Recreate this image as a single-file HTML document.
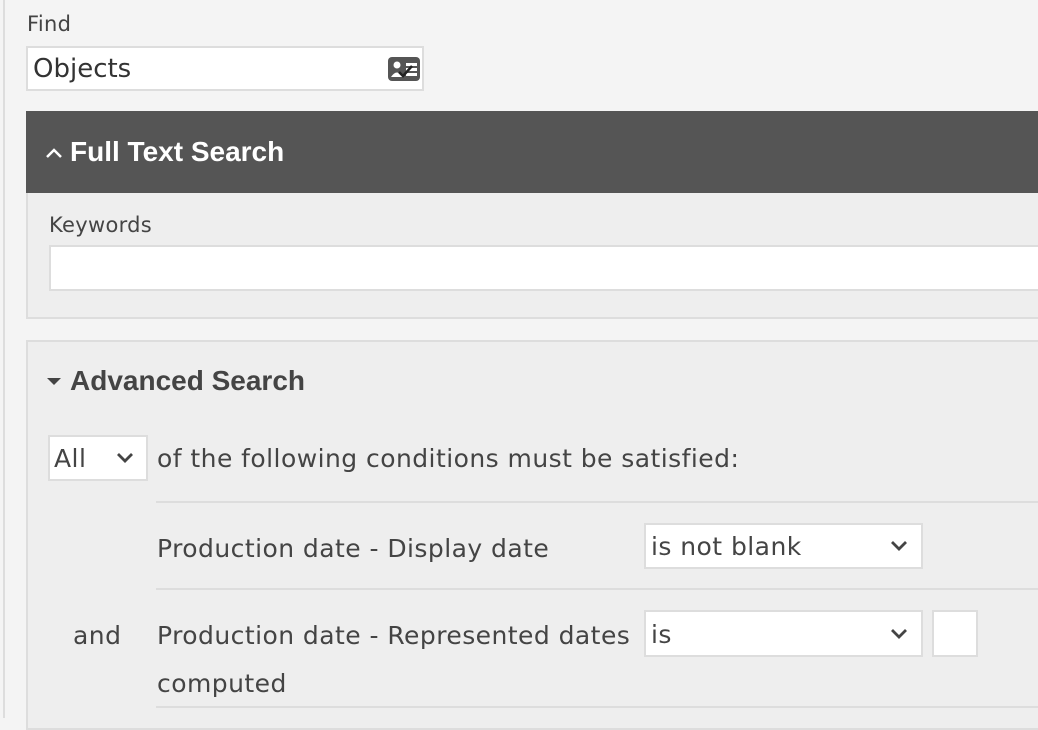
<!DOCTYPE html>
<html><head><style>
body{margin:0;width:1038px;height:718px;background:#f4f4f4;font-family:"DejaVu Sans",sans-serif;color:#444;position:relative;overflow:hidden}
.a{position:absolute}
.box{position:absolute;background:#fff;border:2px solid #ddd;box-sizing:border-box}
.t{position:absolute;white-space:nowrap;font-size:25px;color:#444;letter-spacing:0.45px}
.h{font-family:"Liberation Sans",sans-serif;font-weight:bold;font-size:28px;letter-spacing:0}
.line{position:absolute;height:2px;background:#ddd}
</style></head><body>
<div class="a" style="left:3px;top:0;width:2px;height:718px;background:#ddd"></div>
<div class="t" style="left:27px;top:12px;font-size:21px;letter-spacing:0.3px">Find</div>
<div class="box" style="left:26px;top:46px;width:398px;height:45px"></div>
<div class="t" style="left:33px;top:54px;font-size:26px;color:#333;letter-spacing:0">Objects</div>
<svg class="a" style="left:388px;top:57px" width="32" height="24" viewBox="0 0 32 24"><rect x="0" y="0" width="32" height="24" rx="4" fill="#555"/><circle cx="9" cy="8" r="3.5" fill="#fff"/><path d="M3 20 Q9 11 15 20Z" fill="#fff"/><rect x="18" y="6" width="11" height="3" fill="#fff"/><rect x="18" y="11" width="11" height="3" fill="#fff"/><rect x="18" y="16" width="11" height="3" fill="#fff"/><path d="M11 15 L15 19 L24 9" stroke="#222" stroke-width="2.5" fill="none"/></svg>

<div class="a" style="left:26px;top:111px;width:1012px;height:82px;background:#555"></div>
<svg class="a" style="left:44px;top:146px" width="20" height="14"><path d="M3 11 L10 4 L17 11" stroke="#fff" stroke-width="2.5" fill="none"/></svg>
<div class="t h" style="left:70px;top:136px;color:#fff">Full Text Search</div>
<div class="a" style="left:26px;top:193px;width:1012px;height:126px;background:#eee;border-left:2px solid #ddd;border-bottom:2px solid #ddd;box-sizing:border-box"></div>
<div class="t" style="left:49px;top:213px;font-size:21px;letter-spacing:0.3px">Keywords</div>
<div class="box" style="left:49px;top:245px;width:995px;height:46px"></div>

<div class="a" style="left:26px;top:340px;width:1020px;height:390px;background:#eee;border:2px solid #ddd;box-sizing:border-box"></div>
<svg class="a" style="left:46px;top:376px" width="18" height="12"><path d="M1 2 L15 2 L8 9Z" fill="#444"/></svg>
<div class="t h" style="left:70px;top:365px">Advanced Search</div>
<div class="box" style="left:48px;top:435px;width:100px;height:46px"></div>
<div class="t" style="left:54px;top:444px">All</div>
<svg class="a" style="left:115px;top:451px" width="20" height="14"><path d="M3 3 L10 10 L17 3" stroke="#444" stroke-width="2.8" fill="none"/></svg>
<div class="t" style="left:157px;top:444px">of the following conditions must be satisfied:</div>
<div class="line" style="left:156px;top:501px;width:900px"></div>
<div class="t" style="left:157px;top:534px">Production date - Display date</div>
<div class="box" style="left:644px;top:523px;width:279px;height:46px"></div>
<div class="t" style="left:651px;top:532px">is not blank</div>
<svg class="a" style="left:889px;top:539px" width="20" height="14"><path d="M3 3 L10 10 L17 3" stroke="#444" stroke-width="2.8" fill="none"/></svg>
<div class="line" style="left:156px;top:588px;width:900px"></div>
<div class="t" style="left:73px;top:621px">and</div>
<div class="t" style="left:157px;top:621px">Production date - Represented dates</div>
<div class="t" style="left:157px;top:669px">computed</div>
<div class="box" style="left:644px;top:610px;width:279px;height:47px"></div>
<div class="t" style="left:651px;top:620px">is</div>
<svg class="a" style="left:889px;top:627px" width="20" height="14"><path d="M3 3 L10 10 L17 3" stroke="#444" stroke-width="2.8" fill="none"/></svg>
<div class="box" style="left:932px;top:610px;width:46px;height:47px"></div>
<div class="line" style="left:156px;top:706px;width:900px"></div>
</body></html>
